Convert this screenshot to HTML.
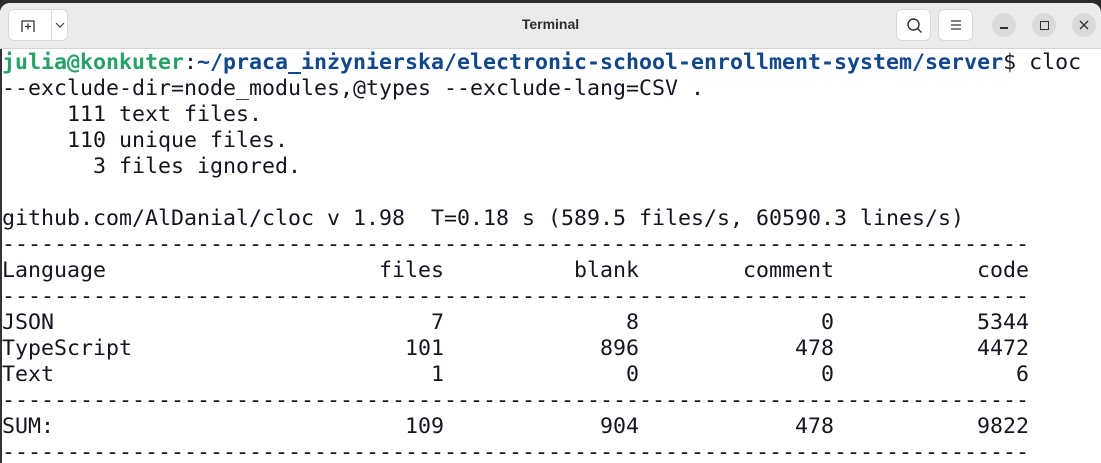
<!DOCTYPE html>
<html><head><meta charset="utf-8"><style>
html,body{margin:0;padding:0;width:1101px;height:463px;overflow:hidden;background:#2b2b2b}
.win{position:absolute;left:0;top:3px;width:1101px;height:460px;background:#fff;border-radius:10px 10px 0 0;overflow:hidden}
.tb{position:absolute;left:0;top:0;width:1101px;height:45px;background:#ebebeb;border-bottom:1px solid #d4d4d4}
.title{position:absolute;left:0;width:1101px;top:13px;text-align:center;font:bold 14px "Liberation Sans",sans-serif;color:#2e2e2e}
.btn{position:absolute;top:6px;height:32px;background:#fff;border:1px solid #d8d8d8;border-radius:6px;box-sizing:border-box}
.circ{position:absolute;top:10px;width:24px;height:24px;border-radius:50%;background:#dadada}
pre{position:absolute;left:2px;top:47px;margin:0;font:21.6px/26px "DejaVu Sans Mono","Liberation Mono",monospace;color:#171421}
.g{color:#26a269;font-weight:bold}.b{color:#12488b;font-weight:bold}
.lb{position:absolute;left:0;top:46px;width:2px;height:420px;background:#333}
</style></head><body>
<div class="win">
<div class="tb">
<div class="btn" style="left:8px;width:60px"><div style="position:absolute;left:42px;top:0;width:1px;height:30px;background:#d8d8d8"></div>
<svg style="position:absolute;left:11px;top:8px" width="16" height="16" viewBox="0 0 16 16" fill="none" stroke="#333" stroke-width="1.3"><path d="M2 14V3h12v11M5 8.5h6M8 5.5v6"/></svg>
<svg style="position:absolute;left:46px;top:11px" width="10" height="8" viewBox="0 0 10 8" fill="none" stroke="#444" stroke-width="1.2"><path d="M1 2l4 4 4-4"/></svg></div>
<div class="title">Terminal</div>
<div class="btn" style="left:896px;width:35px"><svg style="position:absolute;left:9px;top:7px" width="18" height="18" viewBox="0 0 18 18" fill="none" stroke="#333" stroke-width="1.4"><circle cx="7.5" cy="7.5" r="5.5"/><path d="M11.5 11.5l4 4"/></svg></div>
<div class="btn" style="left:938px;width:35px"><svg style="position:absolute;left:10px;top:9px" width="14" height="12" viewBox="0 0 14 12" stroke="#333" stroke-width="1.3"><path d="M2 2h10M2 6h10M2 10h10"/></svg></div>
<div class="circ" style="left:992px"><div style="position:absolute;left:8px;top:14px;width:8px;height:1.5px;background:#333"></div></div>
<div class="circ" style="left:1032px"><div style="position:absolute;left:7.5px;top:7.5px;width:7px;height:7px;border:1.3px solid #333"></div></div>
<div class="circ" style="left:1072px"><svg style="position:absolute;left:7px;top:7px" width="10" height="10" viewBox="0 0 10 10" stroke="#333" stroke-width="1.4"><path d="M1 1l8 8M9 1l-8 8"/></svg></div>
</div>
<div class="lb"></div>
<pre><span class="g">julia@konkuter</span>:<span class="b">~/praca_inżynierska/electronic-school-enrollment-system/server</span>$ cloc
--exclude-dir=node_modules,@types --exclude-lang=CSV .
     111 text files.
     110 unique files.
       3 files ignored.

github.com/AlDanial/cloc v 1.98  T=0.18 s (589.5 files/s, 60590.3 lines/s)
-------------------------------------------------------------------------------
Language                     files          blank        comment           code
-------------------------------------------------------------------------------
JSON                             7              8              0           5344
TypeScript                     101            896            478           4472
Text                             1              0              0              6
-------------------------------------------------------------------------------
SUM:                           109            904            478           9822
-------------------------------------------------------------------------------</pre>
</div>
</body></html>
